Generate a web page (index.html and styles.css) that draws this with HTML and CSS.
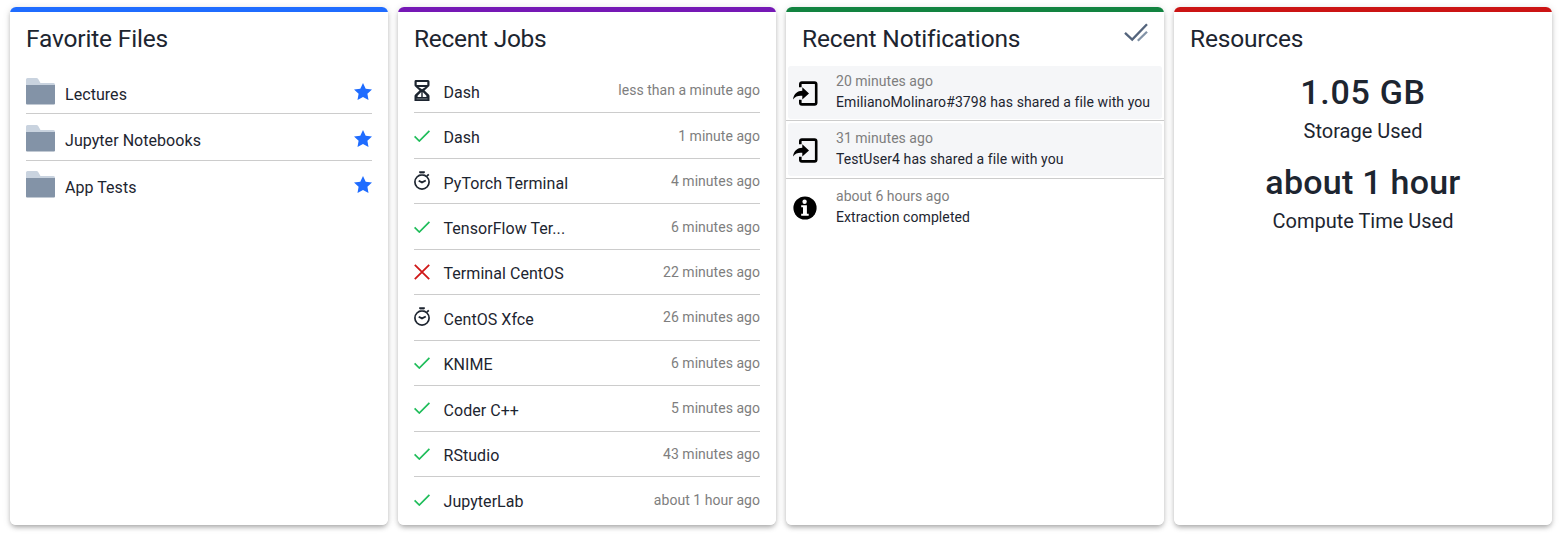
FILE: index.html
```html
<!DOCTYPE html>
<html lang="en">
<head>
<meta charset="utf-8">
<title>Dashboard</title>
<link rel="stylesheet" href="styles.css">
</head>
<body>
<svg class="defs" aria-hidden="true">
  <symbol id="folder" viewBox="0 0 29 27"><path fill="#c9d3df" d="M0 1.500Q0 0 1.500 0H10.500Q11.500 0 12.200 1L14.500 5H27.500Q29 5 29 6.500V15H0Z"/><path fill="#8393a7" d="M0 7H29V25.500Q29 26.500 28 26.500H1Q0 26.500 0 25.500Z"/></symbol>
  <symbol id="star" viewBox="0 0 18 17"><path fill="#1f6cff" d="M9 0L11.700 5.700L18 6.500L13.400 10.700L14.500 17L9 13.900L3.500 17L4.600 10.700L0 6.500L6.300 5.700Z"/></symbol>
  <symbol id="check" viewBox="0 0 16 12"><path fill="none" stroke="#1fbd5a" stroke-width="1.700" d="M.6 6.300L5.300 11L15.400 .8"/></symbol>
  <symbol id="cross" viewBox="0 0 16 16"><path fill="none" stroke="#d01818" stroke-width="1.800" d="M.8 .8L15.200 15.200M15.200 .8L.8 15.200"/></symbol>
  <symbol id="hourglass" viewBox="0 0 16 21"><path fill="#1d2530" fill-rule="evenodd" d="M1.500 0H14Q15.500 0 15.500 1.500V5Q15.500 6 14.800 6.600L10.500 10.500L14.800 14.500Q15.500 15 15.500 16V21H.5V16Q.5 15 1.200 14.500L5.500 10.500L1.200 6.600Q.5 6 .5 5V1.500Q.5 0 1.500 0ZM2.700 2V5H13.300V2ZM4.500 7L8 9.300L11.500 7ZM7.300 12L3.600 15.700V17H7.300ZM8.700 12V17H12.400V15.700Z"/><path stroke="#8a9098" stroke-width=".8" d="M2.500 18.900H13.500"/></symbol>
  <symbol id="timer" viewBox="0 0 16 19"><g fill="none" stroke="#1d2530"><circle cx="8" cy="11" r="7.100" stroke-width="1.700"/><path stroke-width="1.800" d="M5.200 1.200H10.800M4.700 9.700L8 11.400L11.800 9.500M12.800 5.200L14.800 3.400"/><path stroke="#6b7078" stroke-width="1.300" d="M5.800 3H10.200"/></g></symbol>
  <symbol id="share" viewBox="0 0 25 25"><path fill="none" stroke="#000" stroke-width="2.600" d="M7.300 6.200V3.200Q7.300 1.600 8.900 1.600H21.500Q23.200 1.600 23.200 3.200V21.800Q23.200 23.400 21.500 23.400H8.900Q7.300 23.400 7.300 21.800V18.800"/><path d="M0 18.500C1 12.500 4.500 10 9.300 9.800V6.300L16 12.400L9.300 18.500V14.800C5.300 14.400 2.500 15.300 0 18.500Z"/></symbol>
  <symbol id="info" viewBox="0 0 24 24"><circle cx="12" cy="12" r="11.600"/><g fill="#fff"><circle cx="11.600" cy="5.700" r="2.200"/><path d="M8.200 9.300H13.900V17.800H15.700V19.800H8.200V17.800H10V11.300H8.200Z"/></g></symbol>
  <symbol id="readall" viewBox="0 0 24 19"><g fill="none" stroke-width="2.300"><path stroke="#8393a7" d="M13.800 17.800L23 8.800"/><path stroke="#54647c" d="M1 9.800L8.200 16.600L23 1.200"/></g></symbol>
</svg>
<main class="dashboard">
  <section class="card card-blue">
    <h3 class="title">Favorite Files</h3>
    <ul class="list files">
      <li><svg class="folder"><use href="#folder"/></svg><span class="name">Lectures</span><svg class="star"><use href="#star"/></svg></li>
      <li><svg class="folder"><use href="#folder"/></svg><span class="name">Jupyter Notebooks</span><svg class="star"><use href="#star"/></svg></li>
      <li><svg class="folder"><use href="#folder"/></svg><span class="name">App Tests</span><svg class="star"><use href="#star"/></svg></li>
    </ul>
  </section>
  <section class="card card-purple">
    <h3 class="title title-jobs">Recent Jobs</h3>
    <ul class="list jobs">
      <li><svg class="hourglass"><use href="#hourglass"/></svg><span class="name">Dash</span><time>less than a minute ago</time></li>
      <li><svg class="check"><use href="#check"/></svg><span class="name">Dash</span><time>1 minute ago</time></li>
      <li><svg class="timer"><use href="#timer"/></svg><span class="name">PyTorch Terminal</span><time>4 minutes ago</time></li>
      <li><svg class="check"><use href="#check"/></svg><span class="name">TensorFlow Ter...</span><time>6 minutes ago</time></li>
      <li><svg class="cross"><use href="#cross"/></svg><span class="name">Terminal CentOS</span><time>22 minutes ago</time></li>
      <li><svg class="timer"><use href="#timer"/></svg><span class="name">CentOS Xfce</span><time>26 minutes ago</time></li>
      <li><svg class="check"><use href="#check"/></svg><span class="name">KNIME</span><time>6 minutes ago</time></li>
      <li><svg class="check"><use href="#check"/></svg><span class="name">Coder C++</span><time>5 minutes ago</time></li>
      <li><svg class="check"><use href="#check"/></svg><span class="name">RStudio</span><time>43 minutes ago</time></li>
      <li><svg class="check"><use href="#check"/></svg><span class="name">JupyterLab</span><time>about 1 hour ago</time></li>
    </ul>
  </section>
  <section class="card card-green">
    <header class="card-head"><h3 class="title">Recent Notifications</h3><svg class="readall"><use href="#readall"/></svg></header>
    <ul class="notes">
      <li><div class="note unread"><svg class="share"><use href="#share"/></svg><div><time>20 minutes ago</time><p>EmilianoMolinaro#3798 has shared a file with you</p></div></div></li>
      <li><div class="note unread"><svg class="share"><use href="#share"/></svg><div><time>31 minutes ago</time><p>TestUser4 has shared a file with you</p></div></div></li>
      <li><div class="note"><svg class="info"><use href="#info"/></svg><div><time>about 6 hours ago</time><p>Extraction completed</p></div></div></li>
    </ul>
  </section>
  <section class="card card-red">
    <h3 class="title">Resources</h3>
    <div class="stats">
      <strong class="storage">1.05 GB</strong><span>Storage Used</span>
      <strong>about 1 hour</strong><span>Compute Time Used</span>
    </div>
  </section>
</main>
</body>
</html>
```
FILE: styles.css
```css
* { box-sizing: border-box; }
body { margin: 0; background: #fff; color: #1d2530; font-family: Roboto, "Liberation Sans", sans-serif; }
svg { display: block; flex: none; overflow: visible; }
.defs { position: absolute; width: 0; height: 0; }
ul { list-style: none; margin: 0; padding: 0; }
p { margin: 0; }
.dashboard { display: grid; grid-template-columns: repeat(4, 378px); align-items: start; column-gap: 10px; height: 541px; padding: 7px 0 0 10px; }
.card { height: 518px; border-radius: 6px; background: linear-gradient(var(--accent) 5px, #fff 5px); box-shadow: 0 3px 5px -1px rgba(0,0,0,.3), 0 1px 9px rgba(0,0,0,.11); }
.card-blue { --accent: #1f6cff; }
.card-purple { --accent: #7518b5; }
.card-green { --accent: #128340; }
.card-red { --accent: #cb1414; }
.title { margin: 0; padding: 16px 16px 0; height: 59px; font-size: 24.500px; line-height: 32px; font-weight: 400; letter-spacing: -.17px; white-space: nowrap; }
.title-jobs { letter-spacing: -.27px; }
.list { padding: 2px 16px 0; }
.list li { display: flex; align-items: center; border-bottom: 1px solid #ccc; }
.list li:last-child { border-bottom: 0; }
.name { font-size: 16px; line-height: 20px; letter-spacing: .05px; white-space: nowrap; }
time { color: #7e7e7e; font-size: 14px; line-height: 18px; letter-spacing: .03px; white-space: nowrap; }
.files li { height: 46.400px; }
.files .name { padding: 8px 0 0 10px; }
.folder { width: 29px; height: 27px; margin-top: 2px; }
.star { width: 18px; height: 17px; margin: 2px 0 0 auto; }
.jobs li { height: 45.440px; }
.jobs .name { padding-top: 5px; }
.jobs time { margin-left: auto; }
.check { width: 16px; height: 12px; margin: 0 13.500px 0 0; }
.cross { width: 16px; height: 16px; margin: 0 13.500px 0 0; }
.hourglass { width: 16px; height: 21px; margin: 0 13.500px 0 0; }
.timer { width: 16px; height: 19px; margin: 0 13.500px 1px 0; }
.card-head { display: flex; justify-content: space-between; }
.card-head .title { padding-right: 0; }
.readall { width: 24px; height: 19px; margin: 16px 16px 0 0; }
.notes li { height: 58px; border-bottom: 1px solid #ccc; padding: 2px 2px 0; }
.notes li:first-child { height: 55px; padding-top: 0; }
.notes li:last-child { border: 0; }
.note { display: flex; align-items: center; height: 53px; border-radius: 3px; padding-left: 5px; }
.unread { background: #f5f6f8; }
.note time { display: block; line-height: 18px; }
.note p { font-size: 14px; line-height: 24px; letter-spacing: .09px; white-space: nowrap; }
.share { width: 25px; height: 25px; margin: 2px 18px 0 0; }
.info { width: 24px; height: 24px; margin: 1px 19px 0 0; }
.stats { display: flex; flex-direction: column; align-items: center; padding-top: 4px; }
.stats strong { font-size: 34px; line-height: 44px; font-weight: 500; letter-spacing: .25px; }
.stats .storage { letter-spacing: .7px; }
.stats span { font-size: 20px; line-height: 30px; padding-top: 2px; margin-bottom: 14px; }
```
